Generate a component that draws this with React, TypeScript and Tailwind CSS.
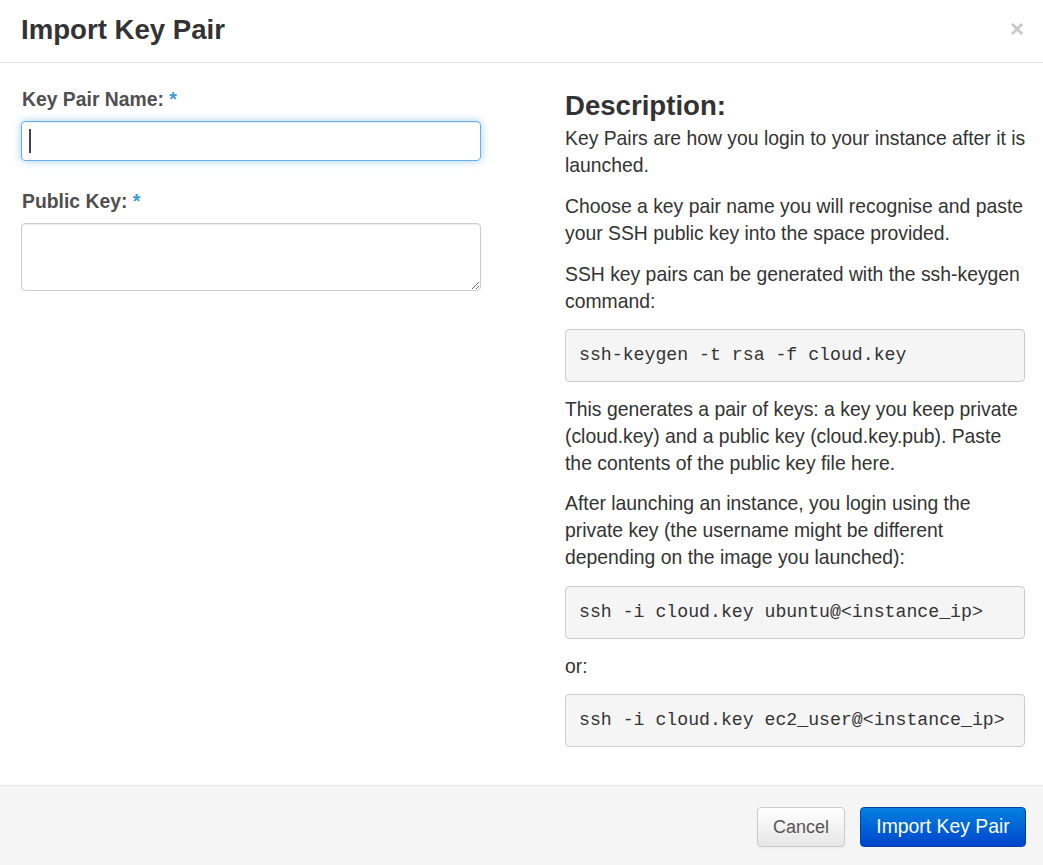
import React from "react";

const code = "rounded-[4px] border border-[#cccccc] bg-[#f5f5f5] px-[13px] py-[12px] text-[18.2px] leading-[27px] text-[#333] whitespace-pre";
const mono = { fontFamily: '"Liberation Mono", "Courier New", monospace' };

export default function App() {
  return (
    <div
      className="w-[1043px] h-[865px] bg-white flex flex-col text-[#333]"
      style={{ fontFamily: '"Liberation Sans", Arial, sans-serif' }}
    >
      <div className="h-[63px] border-b border-[#e5e5e5] flex items-center justify-between pl-[21px] pr-[19px] shrink-0">
        <h3 className="text-[27.6px] font-bold leading-[30px] text-[#333] mt-[-2px]">Import Key Pair</h3>
        <span className="text-[24px] font-bold text-[#c9c9c9] leading-none mt-[-4px]">×</span>
      </div>
      <div className="flex-1 flex pl-[21px] pt-[23px]">
        <div className="w-[460px] shrink-0">
          <div className="text-[19.35px] leading-[27px] font-bold text-[#4f4f4f] pl-[1px]">
            Key Pair Name: <span className="text-[#3a9ad6]">*</span>
          </div>
          <div className="mt-[8px] h-[40px] rounded-[4px] border border-[#66afe9] shadow-[inset_0_1px_1px_rgba(0,0,0,0.075),0_0_8px_rgba(102,175,233,0.6)] flex items-center pl-[7px]">
            <span className="inline-block w-[2px] h-[24px] bg-[#444]" />
          </div>
          <div className="mt-[27px] text-[19.35px] leading-[27px] font-bold text-[#4f4f4f] pl-[1px]">
            Public Key: <span className="text-[#3a9ad6]">*</span>
          </div>
          <textarea
            readOnly
            className="mt-[8px] block w-[460px] h-[68px] rounded-[4px] border border-[#cccccc] shadow-[inset_0_1px_1px_rgba(0,0,0,0.075)] outline-none"
          />
        </div>
        <div className="w-[460px] shrink-0 ml-[84px] text-[19.35px] leading-[27px]">
          <h3 className="text-[27.6px] font-bold leading-[30px] mt-[5px] mb-[4px]">Description:</h3>
          <p className="mb-[14px] mr-[-6px]">Key Pairs are how you login to your instance after it is launched.</p>
          <p className="mb-[14px] mr-[-6px]">Choose a key pair name you will recognise and paste your SSH public key into the space provided.</p>
          <p className="mb-[14px] mr-[-6px]">SSH key pairs can be generated with the ssh-keygen command:</p>
          <pre className={code} style={mono}>ssh-keygen -t rsa -f cloud.key</pre>
          <p className="mt-[14px] mb-[13px] mr-[-6px]">This generates a pair of keys: a key you keep private (cloud.key) and a public key (cloud.key.pub). Paste the contents of the public key file here.</p>
          <p className="mb-[15px] mr-[-6px]">After launching an instance, you login using the private key (the username might be different depending on the image you launched):</p>
          <pre className={code} style={mono}>ssh -i cloud.key ubuntu@&lt;instance_ip&gt;</pre>
          <p className="mt-[14px] mb-[14px]">or:</p>
          <pre className={code} style={mono}>ssh -i cloud.key ec2_user@&lt;instance_ip&gt;</pre>
        </div>
      </div>
      <div className="h-[80px] shrink-0 border-t border-[#e5e5e5] bg-[#f5f5f5] flex items-start justify-end gap-[15px] pt-[21px] pr-[17px]">
        <button className="h-[40px] w-[88px] rounded-[4px] border border-[#cccccc] bg-gradient-to-b from-white to-[#e6e6e6] text-[18px] text-[#555] shadow-[inset_0_1px_0_rgba(255,255,255,0.2),0_1px_2px_rgba(0,0,0,0.05)]">
          Cancel
        </button>
        <button className="h-[40px] w-[166px] rounded-[4px] border border-[#0044aa] bg-gradient-to-b from-[#0a80e0] to-[#0044cc] text-[19.35px] text-white">
          Import Key Pair
        </button>
      </div>
    </div>
  );
}
